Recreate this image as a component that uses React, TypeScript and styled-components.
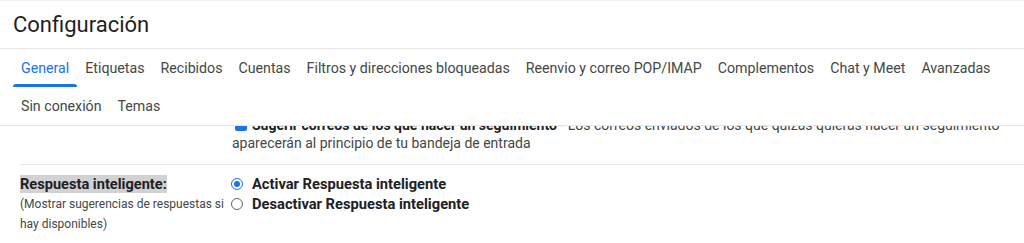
import React from 'react';
import styled, { createGlobalStyle } from 'styled-components';

const GlobalStyle = createGlobalStyle`
  html, body {
    margin: 0;
    padding: 0;
    background: #ffffff;
  }
  body {
    font-family: Roboto, "Liberation Sans", Arial, sans-serif;
    color: #1f1f1f;
  }
`;

const Page = styled.div`
  width: 1024px;
  height: 243px;
  overflow: hidden;
  display: flex;
  flex-direction: column;
  border-top: 1px solid #f3f3f3;
  box-sizing: border-box;
`;

const Header = styled.div`
  height: 47px;
  display: flex;
  align-items: center;
  padding-left: 13px;
  border-bottom: 1px solid #e6e6e6;
  flex-shrink: 0;
`;

const Title = styled.h1`
  margin: 0;
  font-size: 22px;
  font-weight: 400;
  color: #1f1f1f;
`;

const TabBar = styled.nav`
  display: flex;
  flex-wrap: wrap;
  padding: 0 13px;
  border-bottom: 1px solid #e6e6e6;
  flex-shrink: 0;
`;

const Tab = styled.div<{ $active?: boolean }>`
  position: relative;
  height: 38px;
  padding: 0 8px;
  display: flex;
  align-items: center;
  font-size: 14.2px;
  color: ${p => (p.$active ? '#1a73e8' : '#444746')};
  white-space: nowrap;

  &::after {
    content: '';
    display: ${p => (p.$active ? 'block' : 'none')};
    position: absolute;
    left: 0;
    right: 0;
    bottom: 0;
    height: 3px;
    border-radius: 3px 3px 0 0;
    background: #1a73e8;
  }
`;

const Content = styled.div`
  flex: 1;
  overflow: hidden;
  padding-left: 20px;
`;

const Scrolled = styled.div`
  margin-top: -20px;
`;

const Row = styled.div<{ $first?: boolean }>`
  display: grid;
  grid-template-columns: 211px 1fr;
  padding: ${p => (p.$first ? '10px 0 12px' : '9px 0 10px')};
  border-top: ${p => (p.$first ? 'none' : '1px solid #e8e8e8')};
`;

const LabelCell = styled.div`
  padding-right: 4px;
  line-height: 20px;
`;

const LabelTitle = styled.span`
  font-size: 14.6px;
  font-weight: 700;
  color: #202124;
  background: #d2d2d2;
`;

const LabelHint = styled.div`
  font-size: 12px;
  color: #444746;
  line-height: 20px;
`;

const ValueCell = styled.div`
  font-size: 14px;
  color: #444746;
  line-height: 18px;
  padding-left: 1px;
`;

const Check = styled.span`
  display: inline-block;
  width: 12px;
  height: 12px;
  margin: 0 5px 0 3px;
  border-radius: 2px;
  background: #1a73e8;
  vertical-align: -1px;
`;

const Strong = styled.b`
  font-weight: 700;
  color: #202124;
`;

const Option = styled.label`
  display: flex;
  align-items: center;
  gap: 9px;
  height: 20px;
  font-size: 14.7px;
  font-weight: 700;
  color: #202124;
`;

const Radio = styled.span<{ $checked?: boolean }>`
  width: 12px;
  height: 12px;
  box-sizing: border-box;
  border-radius: 50%;
  border: 1px solid ${p => (p.$checked ? '#1a73e8' : '#5f6368')};
  display: flex;
  align-items: center;
  justify-content: center;

  &::after {
    content: '';
    display: ${p => (p.$checked ? 'block' : 'none')};
    width: 6px;
    height: 6px;
    border-radius: 50%;
    background: #1a73e8;
  }
`;

const tabs = [
  'General',
  'Etiquetas',
  'Recibidos',
  'Cuentas',
  'Filtros y direcciones bloqueadas',
  'Reenvio y correo POP/IMAP',
  'Complementos',
  'Chat y Meet',
  'Avanzadas',
  'Sin conexión',
  'Temas',
];

const App = () => {
  return (
    <Page>
      <GlobalStyle />
      <Header>
        <Title>Configuración</Title>
      </Header>
      <TabBar>
        {tabs.map((t, i) => (
          <Tab key={t} $active={i === 0}>
            {t}
          </Tab>
        ))}
      </TabBar>
      <Content>
        <Scrolled>
          <Row $first>
            <LabelCell />
            <ValueCell>
              <Check />
              <Strong>Sugerir correos de los que hacer un seguimiento</Strong> - Los correos enviados de los que
              quizás quieras hacer un seguimiento aparecerán al principio de tu bandeja de entrada
            </ValueCell>
          </Row>
          <Row>
            <LabelCell>
              <LabelTitle>Respuesta inteligente:</LabelTitle>
              <LabelHint>(Mostrar sugerencias de respuestas si hay disponibles)</LabelHint>
            </LabelCell>
            <div>
              <Option>
                <Radio $checked />
                Activar Respuesta inteligente
              </Option>
              <Option>
                <Radio />
                Desactivar Respuesta inteligente
              </Option>
            </div>
          </Row>
        </Scrolled>
      </Content>
    </Page>
  );
};

export default App;
